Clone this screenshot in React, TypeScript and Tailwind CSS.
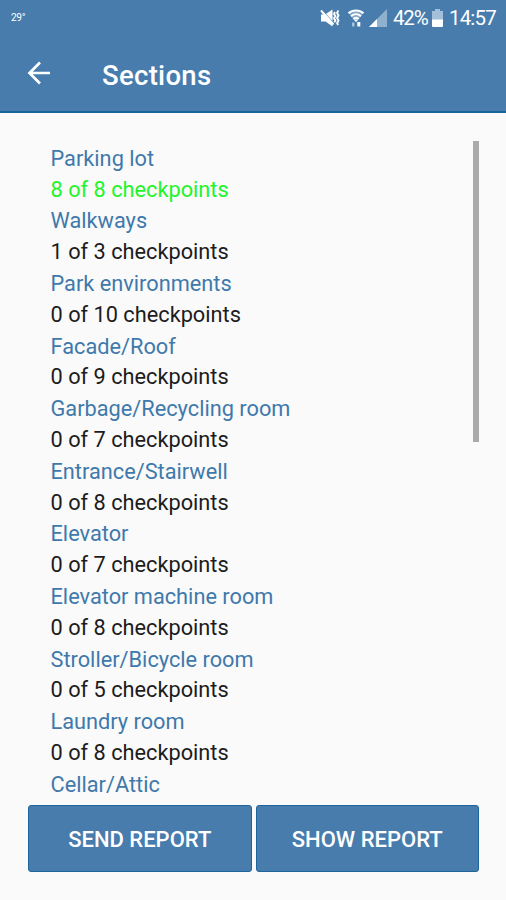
type Section = { name: string; done?: number; total?: number };

const sections: Section[] = [
  { name: "Parking lot", done: 8, total: 8 },
  { name: "Walkways", done: 1, total: 3 },
  { name: "Park environments", done: 0, total: 10 },
  { name: "Facade/Roof", done: 0, total: 9 },
  { name: "Garbage/Recycling room", done: 0, total: 7 },
  { name: "Entrance/Stairwell", done: 0, total: 8 },
  { name: "Elevator", done: 0, total: 7 },
  { name: "Elevator machine room", done: 0, total: 8 },
  { name: "Stroller/Bicycle room", done: 0, total: 5 },
  { name: "Laundry room", done: 0, total: 8 },
  { name: "Cellar/Attic" },
];

function MutedIcon() {
  return (
    <svg width="20" height="20" viewBox="0 0 20 20" className="shrink-0">
      <path d="M1 6.500h4L12.500 1.500v17L5.500 13.500H1z" fill="#fff" />
      <path d="M2.500 2.500 13.500 14.500" stroke="#477dae" strokeWidth="0.900" />
      <path d="M1 2.500 13.500 16.500" stroke="#fff" strokeWidth="1.900" />
      <path d="M15 4l-1 2 1.400 2-1.400 2.200 1.400 2.200-1 2M18.300 2.500l-1.200 2.500 1.400 2.500-1.400 2.500 1.400 2.500-1.400 2.500 1 2" fill="none" stroke="#fff" strokeWidth="1.900" />
    </svg>
  );
}

function WifiIcon() {
  return (
    <svg width="18" height="20" viewBox="0 0 18 20" className="shrink-0">
      <path d="M1.500 5C5.500 1.200 12.500 1.200 16.500 5L9 14.500z" fill="#fff" fillOpacity="0.350" />
      <path d="M1.500 5.200C5.500 1.500 12.500 1.500 16.500 5.200" fill="none" stroke="#fff" strokeWidth="2.100" />
      <path d="M4 8.200c3-2.600 7-2.600 10 0M6.300 11c1.600-1.500 3.800-1.500 5.400 0" fill="none" stroke="#fff" strokeWidth="1.800" />
      <path d="M9 14 6.800 11.500h4.400z" fill="#fff" />
      <path d="M5 14.500h2.500V18.500H5z" fill="#a9c3db" />
      <path d="M10.300 18.500v-4.500h3v4.500z" fill="#fff" />
    </svg>
  );
}

function SignalIcon() {
  return (
    <svg width="18" height="18" viewBox="0 0 18 18" className="shrink-0">
      <path d="M0 18 18 0v18z" fill="#8fb1d0" />
      <path d="M0 18 8 10v8z" fill="#fff" />
    </svg>
  );
}

function BatteryIcon() {
  return (
    <svg width="11" height="18" viewBox="0 0 11 18" className="shrink-0">
      <path d="M3 0h5v2h3v9H0V2h3z" fill="#a3bfd9" />
      <path d="M0 10.500h11V17a1 1 0 0 1-1 1H1a1 1 0 0 1-1-1z" fill="#fff" />
    </svg>
  );
}

function StatusBar() {
  return (
    <div className="flex h-[36px] items-center pr-[9px] pl-[11px] text-white">
      <span className="text-[10px] leading-[36px] tracking-[-0.300px]">29°</span>
      <div className="ml-auto flex items-center">
        <MutedIcon />
        <span className="w-[7px]" />
        <WifiIcon />
        <span className="w-[4px]" />
        <SignalIcon />
        <span className="ml-[6px] w-[36px] text-[20.500px] leading-[36px] tracking-[-1.150px] whitespace-nowrap">42%</span>
        <span className="w-[3px]" />
        <BatteryIcon />
        <span className="ml-[6px] w-[48px] text-[20.500px] leading-[36px] tracking-[-0.850px] whitespace-nowrap">14:57</span>
      </div>
    </div>
  );
}

function SectionItem({ name, done, total }: Section) {
  return (
    <li className="h-[62.600px]">
      <div className="h-[31.300px] text-[#3f79ab]">{name}</div>
      {total !== undefined && (
        <div className={done === total ? "-mt-[0.600px] text-[#1ff529]" : "-mt-[0.600px] text-[#1c1c1c]"}>
          {done} of {total} checkpoints
        </div>
      )}
    </li>
  );
}

function ReportButton({ label }: { label: string }) {
  return (
    <button className="h-[67px] flex-1 rounded-[3px] border border-[#1f659d] bg-[#477cad] pt-[2px] text-[22px] font-medium text-white">
      {label}
    </button>
  );
}

export default function App() {
  return (
    <div className="flex h-[900px] w-[506px] flex-col overflow-hidden bg-[#fafafa] font-[Roboto,sans-serif]">
      <header className="h-[113px] shrink-0 border-b-2 border-[#17659b] bg-[#477cad]">
        <StatusBar />
        <div className="flex h-[75px] items-center pl-[27px] text-white">
          <svg width="24" height="24" viewBox="0 0 24 24" fill="none" stroke="#fff" strokeWidth="2.700" className="-mt-[2px]">
            <path d="M23 12H2.500M13 1.500 2.500 12 13 22.500" />
          </svg>
          <h1 className="ml-[51px] pt-[4px] text-[27.500px] font-medium tracking-[0.300px]">Sections</h1>
        </div>
      </header>
      <main className="flex h-[683px] shrink-0 justify-between overflow-hidden pr-[27px] pl-[50.500px]">
        <ul className="pt-[29.900px] text-[21.750px] leading-[31.300px]">
          {sections.map((section) => (
            <SectionItem key={section.name} {...section} />
          ))}
        </ul>
        <div className="mt-[28px] h-[301px] w-[6px] bg-[#aaaaaa]" />
      </main>
      <footer className="mt-[9px] flex gap-[4px] pr-[27px] pl-[28px]">
        <ReportButton label="SEND REPORT" />
        <ReportButton label="SHOW REPORT" />
      </footer>
    </div>
  );
}
